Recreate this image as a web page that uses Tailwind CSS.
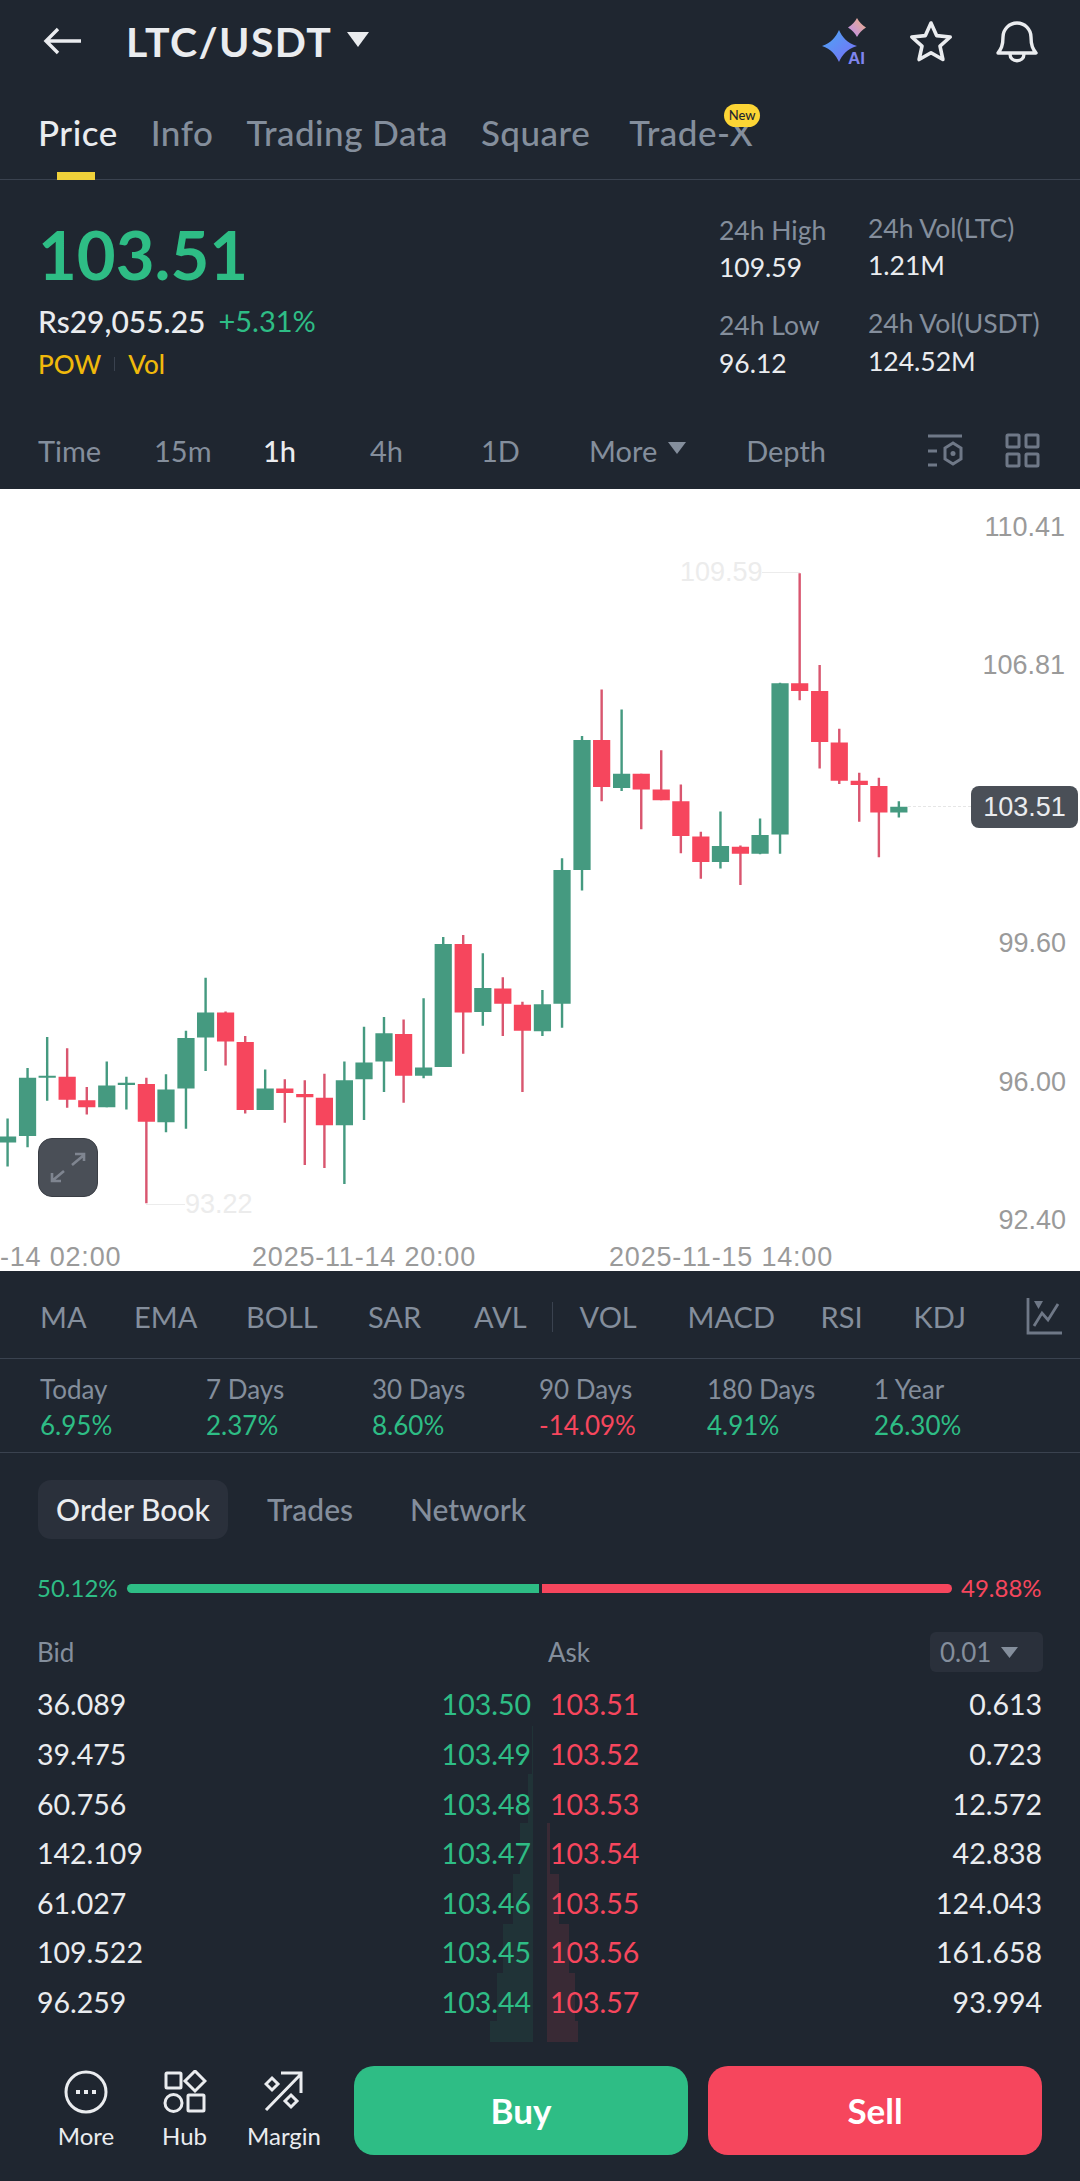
<!doctype html>
<html>
<head>
<meta charset="utf-8">
<script src="https://cdn.jsdelivr.net/npm/@tailwindcss/browser@4"></script>
</head>
<body class="bg-[#1f2630]">
<div class="w-[1080px] h-[2181px] overflow-hidden bg-[#1f2630] text-[#eaecef] [font-family:Lato,sans-serif]">

  <!-- header -->
  <header class="h-[82px] flex items-center pl-[43px] pr-[42px]">
    <svg width="38" height="28" viewBox="0 0 38 28" fill="none" stroke="#eaecef" stroke-width="3.4"><path d="M38 14H3M15 2 3 14l12 12"/></svg>
    <h1 class="ml-[45px] text-[41px] leading-none font-bold tracking-[1.4px] text-[#eaecef]">LTC/USDT</h1>
    <svg class="ml-[15px] mt-[-4px]" width="22" height="15" viewBox="0 0 22 15"><path d="M0 0h22L11 15z" fill="#eaecef"/></svg>
    <svg class="ml-auto" width="47" height="50" viewBox="0 0 47 50">
      <defs>
        <linearGradient id="g1" x1="0" y1="0" x2="1" y2="1"><stop offset="0" stop-color="#4aa8f5"/><stop offset="1" stop-color="#7b6cf5"/></linearGradient>
        <linearGradient id="g2" x1="1" y1="0" x2="0" y2="1"><stop offset="0" stop-color="#f0b080"/><stop offset="1" stop-color="#b98cf5"/></linearGradient>
      </defs>
      <path d="M17 14c3 7 8 13 18 16-10 3-15 9-18 16-3-7-8-13-17-16 9-3 14-9 17-16z" fill="url(#g1)"/>
      <path d="M35 2c2 4 5 7 9 9.500-4 2.500-7 5.500-9 9.500-2-4-5-7-9-9.500 4-2.500 7-5.500 9-9.500z" fill="url(#g2)"/>
      <text x="26" y="48" font-family="Liberation Sans" font-weight="700" font-size="17" fill="#7f85ee">AI</text>
    </svg>
    <svg class="ml-[40px]" width="44" height="42" viewBox="0 0 44 42" fill="none" stroke="#eaecef" stroke-width="3.6" stroke-linejoin="round"><path d="M22 3l5.6 12.6 13.6 1.4-10.2 9.1 2.9 13.4L22 32.7 10.100 39.500 13 26.100 2.800 17l13.600-1.400z"/></svg>
    <svg class="ml-[43px]" width="42" height="44" viewBox="0 0 42 44" fill="none" stroke="#eaecef" stroke-width="3.4" stroke-linejoin="round"><path d="M7 18a14 14 0 0 1 28 0c0 9 2 12 5 16H2c3-4 5-7 5-16zM14 35c0 9 14 9 14 0"/></svg>
  </header>

  <!-- tabs -->
  <nav class="relative h-[98px] border-b border-[#3a424f] pl-[38px] flex gap-[33px] pt-[30px] text-[35px] leading-[40px] tracking-[0.5px] font-medium text-[#848e9c]">
    <span class="relative text-[#eaecef]">Price<span class="absolute left-[19px] top-[60px] w-[38px] h-[8px] bg-[#f0d13a]"></span></span>
    <span>Info</span><span>Trading Data</span><span>Square</span>
    <span class="relative ml-[6px]">Trade-X<span class="absolute left-[95px] top-[-8px] w-[36px] h-[23px] rounded-full bg-[#fcd535] text-[#1f2630] text-[13px] leading-[23px] tracking-normal text-center">New</span></span>
  </nav>

  <!-- ticker -->
  <section class="h-[232px] relative flex justify-between pl-[38px] pr-[38px]">
    <div class="pt-[42px]">
      <div class="text-[67px] leading-[64px] font-bold text-[#2ebd85]">103.51</div>
      <div class="mt-[17px] flex gap-[13px] text-[30px] leading-[36px] font-medium"><span>Rs29,055.25</span><span class="text-[#2ebd85] font-normal text-[29px]">+5.31%</span></div>
      <div class="mt-[7px] flex items-center text-[26px] leading-[36px] font-medium text-[#f0b90b]"><span>POW</span><span class="w-px h-[14px] bg-[#3a424f] mx-[13px]"></span><span>Vol</span></div>
    </div>
    <div class="flex gap-[42px] text-[26.500px] leading-[34px] whitespace-nowrap">
      <div class="w-[107px] pt-[33px]">
        <div class="text-[#848e9c]">24h High</div><div class="mt-[3px]">109.59</div>
        <div class="mt-[24px] text-[#848e9c]">24h Low</div><div class="mt-[4px]">96.12</div>
      </div>
      <div class="w-[174px] pt-[31px]">
        <div class="text-[#848e9c]">24h Vol(LTC)</div><div class="mt-[3px]">1.21M</div>
        <div class="mt-[24px] text-[#848e9c]">24h Vol(USDT)</div><div class="mt-[4px]">124.52M</div>
      </div>
    </div>
  </section>

  <!-- intervals -->
  <div class="relative h-[77px] text-[29px] text-[#848e9c] pl-[38px] pr-[40px] flex items-center">
    <span class="w-[116px]">Time</span><span class="w-[109px]">15m</span><span class="w-[107px] text-[#eaecef] font-medium">1h</span><span class="w-[111px]">4h</span><span class="w-[108px]">1D</span>
    <span>More</span>
    <svg class="ml-[11px] mt-[-6px]" width="18" height="12" viewBox="0 0 18 12"><path d="M0 0h18L9 12z" fill="#848e9c"/></svg>
    <span class="ml-[60px]">Depth</span>
    <svg class="ml-auto" width="36" height="36" viewBox="0 0 36 36" fill="none" stroke="#6f7887" stroke-width="3"><path d="M1 3h34M1 18h9M1 32h9"/><path d="M26 10l8 5v11l-8 5-8-5V15z"/><circle cx="26" cy="20.500" r="2.500" fill="#6f7887" stroke="none"/></svg>
    <svg class="ml-[42px]" width="35" height="35" viewBox="0 0 35 35" fill="none" stroke="#6f7887" stroke-width="3"><rect x="2" y="2" width="12" height="12" rx="1"/><rect x="21" y="2" width="12" height="12" rx="1"/><rect x="2" y="21" width="12" height="12" rx="1"/><rect x="21" y="21" width="12" height="12" rx="1"/></svg>
  </div>

  <!-- chart -->
  <section class="relative h-[782px] bg-white overflow-hidden [font-family:'Liberation_Sans',sans-serif] text-[27px] leading-none text-[#9a9a9a]">
    <svg class="absolute left-0 top-[1px] w-[1080px] h-[800px]" viewBox="0 0 3136 1568" preserveAspectRatio="none" fill="none">
      <path stroke="#459a80" stroke-width="7" d="M22 1232V1326M80 1133V1288M137 1072V1197M310 1120V1210M367 1150V1214M482 1145V1259M540 1060V1252M597 956V1139M770 1136V1215M1000 1120V1360M1057 1052V1235M1115 1033V1180M1230 996V1153M1287 876V1131M1402 908V1050M1575 980V1070M1632 722V1054M1690 482V785M1805 430V590M2092 630V742M2207 644V714M2265 378V713M2610 610V642"/>
      <path stroke="#459a80" stroke-width="50" d="M22 1267V1279M80 1152V1266M137 1148V1152M310 1167V1210M367 1162V1166M482 1175V1239M540 1074V1173M597 1024V1073M770 1173V1215M1000 1157V1245M1057 1122V1155M1115 1065V1120M1230 1132V1148M1287 890V1131M1402 976V1023M1575 1008V1061M1632 745V1007M1690 490V745M1805 556V584M2092 698V729M2207 676V713M2265 379V675M2610 621V632"/>
      <path stroke="#d9566f" stroke-width="7" d="M195 1094V1211M252 1170V1224M425 1152V1398M655 1022V1128M712 1070V1222M827 1155V1240M885 1157V1323M942 1144V1329M1172 1038V1201M1345 872V1105M1460 955V1070M1517 1003V1180M1747 391V610M1862 556V665M1920 510V608M1977 577V712M2035 670V762M2150 697V774M2322 163V412M2380 343V546M2437 468V576M2495 554V650M2552 564V720"/>
      <path stroke="#f6465d" stroke-width="50" d="M195 1150V1195M252 1196V1210M425 1164V1238M655 1024V1081M712 1082V1215M827 1173V1182M885 1184V1190M942 1191V1245M1172 1066V1148M1345 890V1024M1460 977V1007M1517 1009V1060M1747 490V582M1862 556V587M1920 587V608M1977 610V678M2035 679V729M2150 699V713M2322 379V394M2380 394V494M2437 495V570M2495 570V578M2552 580V632"/>
    </svg>

    <!-- high / low markers -->
    <span class="absolute left-[680px] top-[70px] text-[#ececec]">109.59</span>
    <span class="absolute left-[762px] top-[83px] w-[38px] h-px bg-[#ececec]"></span>
    <span class="absolute left-[185px] top-[702px] text-[#ececec]">93.22</span>
    <span class="absolute left-[146px] top-[715px] w-[39px] h-px bg-[#ececec]"></span>

    <!-- price axis -->
    <span class="absolute right-[15px] top-[25px]">110.41</span>
    <span class="absolute right-[15px] top-[163px]">106.81</span>
    <span class="absolute right-[14px] top-[441px]">99.60</span>
    <span class="absolute right-[14px] top-[580px]">96.00</span>
    <span class="absolute right-[14px] top-[718px]">92.40</span>

    <!-- last price -->
    <span class="absolute left-[908px] top-[317px] w-[63px] border-t border-dashed border-[#e6e6e6]"></span>
    <span class="absolute left-[971px] top-[297px] w-[107px] h-[42px] rounded-[8px] bg-[#4a4f57] text-[#eaecef] leading-[42px] text-center">103.51</span>

    <!-- time axis -->
    <span class="absolute left-0 top-[755px] tracking-[0.8px]">-14 02:00</span>
    <span class="absolute left-[252px] top-[755px] tracking-[0.8px]">2025-11-14 20:00</span>
    <span class="absolute left-[609px] top-[755px] tracking-[0.8px]">2025-11-15 14:00</span>

    <!-- expand -->
    <div class="absolute left-[38px] top-[649px] w-[60px] h-[59px] rounded-[14px] bg-[#4a4f57] border border-[#3a3e45] flex items-center justify-center">
      <svg width="36" height="32" viewBox="0 0 36 32" fill="none" stroke="#7f8590" stroke-width="2.600"><path d="M22 13 34 3M25 2h9v7M14 19 2 29M2 21v8h9"/></svg>
    </div>
  </section>

  <!-- indicators -->
  <div class="relative h-[88px] border-b border-[#3a424f] pl-[40px] pt-[4px] flex items-center text-[29px] text-[#848e9c]">
    <span class="w-[94px]">MA</span><span class="w-[112px]">EMA</span><span class="w-[122px]">BOLL</span><span class="w-[106px]">SAR</span><span>AVL</span>
    <span class="w-px h-[30px] bg-[#3a424f] ml-[25px] mr-[27px]"></span>
    <span class="w-[108px]">VOL</span><span class="w-[133px]">MACD</span><span class="w-[93px]">RSI</span><span class="w-[112px]">KDJ</span>
    <svg width="36" height="38" viewBox="0 0 36 38" fill="none" stroke="#6f7887" stroke-width="2.800"><path d="M2 0v35h34M8 28l8-13 6 7 10-16"/><path d="M8 3h9l-4.500 8z" fill="#6f7887" stroke="none"/></svg>
  </div>

  <!-- performance -->
  <div class="h-[94px] border-b border-[#3a424f] pl-[40px] pt-[12px] flex text-[26px] leading-[36px]">
    <div class="w-[166px]"><div class="text-[#848e9c]">Today</div><div class="text-[#2ebd85]">6.95%</div></div>
    <div class="w-[166px]"><div class="text-[#848e9c]">7 Days</div><div class="text-[#2ebd85]">2.37%</div></div>
    <div class="w-[167px]"><div class="text-[#848e9c]">30 Days</div><div class="text-[#2ebd85]">8.60%</div></div>
    <div class="w-[168px]"><div class="text-[#848e9c]">90 Days</div><div class="text-[#f6465d]">-14.09%</div></div>
    <div class="w-[167px]"><div class="text-[#848e9c]">180 Days</div><div class="text-[#2ebd85]">4.91%</div></div>
    <div><div class="text-[#848e9c]">1 Year</div><div class="text-[#2ebd85]">26.30%</div></div>
  </div>

  <!-- order book tabs -->
  <div class="pt-[27px] pl-[38px] flex items-center text-[30px] font-medium text-[#848e9c]">
    <span class="h-[59px] w-[190px] rounded-[13px] bg-[#2a303b] text-[#eaecef] leading-[59px] text-center">Order Book</span>
    <span class="ml-[39px]">Trades</span>
    <span class="ml-[57px]">Network</span>
  </div>

  <!-- ratio -->
  <div class="mt-[34px] h-[30px] pl-[37px] flex items-center text-[24px] leading-none">
    <span class="w-[90px] text-[#2ebd85]">50.12%</span>
    <span class="w-[412px] h-[9px] bg-[#2ebd85] rounded-l-full"></span>
    <span class="ml-[3px] w-[410px] h-[9px] bg-[#f6465d] rounded-r-full"></span>
    <span class="ml-[9px] text-[#f6465d]">49.88%</span>
  </div>

  <!-- book header -->
  <div class="mt-[29px] h-[40px] pl-[37px] pr-[37px] flex items-center text-[26px] text-[#848e9c]">
    <span class="w-[511px]">Bid</span><span>Ask</span>
    <span class="ml-auto w-[113px] h-[40px] rounded-[6px] bg-[#2a303b] flex items-center pl-[10px] gap-[10px]">0.01<svg width="17" height="11" viewBox="0 0 17 11"><path d="M0 0h17L8.500 11z" fill="#848e9c"/></svg></span>
  </div>

  <!-- book rows -->
  <div class="relative pl-[37px] pr-[38px] pt-[8px] text-[28.500px]">
    <svg class="absolute left-0 top-[2px] w-[1080px] h-[370px]" viewBox="0 1674 1080 370">
      <path fill="#2ebd85" fill-opacity=".09" d="M533 1674v368h-43v-21h7v-48h6v-49h10v-50h7v-51h8v-49h4v-48h1v-52z"/>
      <path fill="#f6465d" fill-opacity=".12" d="M547 1823v219h31v-21h-3v-48h-6v-49h-10v-50h-9v-51z"/>
    </svg>
    <div class="relative flex h-[49.6px] items-center"><div class="w-[494px] flex justify-between"><span>36.089</span><span class="text-[#2ebd85]">103.50</span></div><div class="ml-[19px] w-[492px] flex justify-between"><span class="text-[#f6465d]">103.51</span><span>0.613</span></div></div>
    <div class="relative flex h-[49.6px] items-center"><div class="w-[494px] flex justify-between"><span>39.475</span><span class="text-[#2ebd85]">103.49</span></div><div class="ml-[19px] w-[492px] flex justify-between"><span class="text-[#f6465d]">103.52</span><span>0.723</span></div></div>
    <div class="relative flex h-[49.6px] items-center"><div class="w-[494px] flex justify-between"><span>60.756</span><span class="text-[#2ebd85]">103.48</span></div><div class="ml-[19px] w-[492px] flex justify-between"><span class="text-[#f6465d]">103.53</span><span>12.572</span></div></div>
    <div class="relative flex h-[49.6px] items-center"><div class="w-[494px] flex justify-between"><span>142.109</span><span class="text-[#2ebd85]">103.47</span></div><div class="ml-[19px] w-[492px] flex justify-between"><span class="text-[#f6465d]">103.54</span><span>42.838</span></div></div>
    <div class="relative flex h-[49.6px] items-center"><div class="w-[494px] flex justify-between"><span>61.027</span><span class="text-[#2ebd85]">103.46</span></div><div class="ml-[19px] w-[492px] flex justify-between"><span class="text-[#f6465d]">103.55</span><span>124.043</span></div></div>
    <div class="relative flex h-[49.6px] items-center"><div class="w-[494px] flex justify-between"><span>109.522</span><span class="text-[#2ebd85]">103.45</span></div><div class="ml-[19px] w-[492px] flex justify-between"><span class="text-[#f6465d]">103.56</span><span>161.658</span></div></div>
    <div class="relative flex h-[49.6px] items-center"><div class="w-[494px] flex justify-between"><span>96.259</span><span class="text-[#2ebd85]">103.44</span></div><div class="ml-[19px] w-[492px] flex justify-between"><span class="text-[#f6465d]">103.57</span><span>93.994</span></div></div>
  </div>

  <!-- footer -->
  <footer class="relative mt-[39px] flex items-start pl-[50px] pr-[38px]">
    <div class="w-[72px] flex flex-col items-center text-[24px] leading-[30px] pt-[4px]">
      <svg width="44" height="44" viewBox="0 0 44 44" fill="none" stroke="#eaecef" stroke-width="3"><circle cx="22" cy="22" r="20"/><path d="M12 22h4M20 22h4M28 22h4" stroke-width="4"/></svg>
      <span class="mt-[7px]">More</span>
    </div>
    <div class="w-[99px] ml-[13px] flex flex-col items-center text-[24px] leading-[30px] pt-[4px]">
      <svg width="44" height="44" viewBox="0 0 44 44" fill="none" stroke="#eaecef" stroke-width="3"><rect x="3" y="3" width="15" height="15" rx="1"/><path d="M32 1l10 10-10 10-10-10z"/><circle cx="10.500" cy="33" r="8.500"/><rect x="25" y="25" width="16" height="16" rx="1"/></svg>
      <span class="mt-[7px]">Hub</span>
    </div>
    <div class="w-[72px] ml-[14px] flex flex-col items-center text-[24px] leading-[30px] pt-[4px] whitespace-nowrap">
      <svg width="40" height="44" viewBox="0 0 40 44" fill="none" stroke="#eaecef" stroke-width="3"><path d="M2 40 37 4M17 3h20v20"/><path d="M8 8l6 6-6 6-6-6zM27 25l6 6-6 6-6-6z"/></svg>
      <span class="mt-[7px]">Margin</span>
    </div>
    <button class="ml-[34px] w-[334px] h-[89px] rounded-[20px] bg-[#2ebd85] text-white text-[35px] font-bold">Buy</button>
    <button class="ml-[20px] w-[334px] h-[89px] rounded-[20px] bg-[#f6465d] text-white text-[35px] font-bold">Sell</button>
  </footer>
</div>
</body>
</html>
